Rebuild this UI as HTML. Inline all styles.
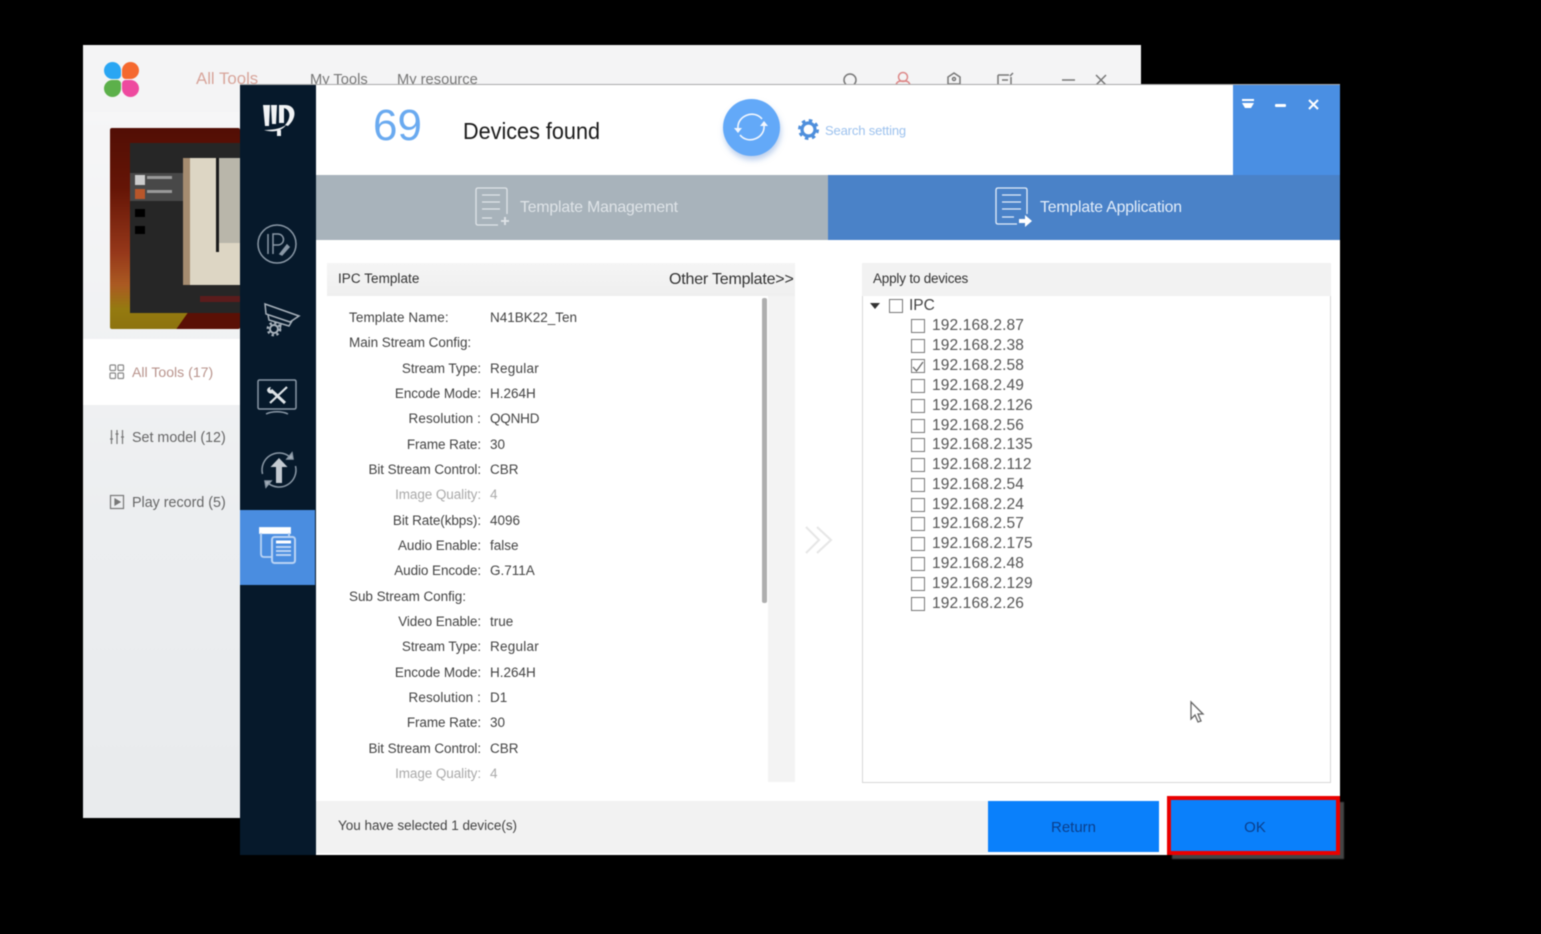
<!DOCTYPE html>
<html><head><meta charset="utf-8"><style>
html,body{margin:0;padding:0;background:#000;}
body{width:1541px;height:934px;position:relative;overflow:hidden;font-family:"Liberation Sans",sans-serif;}
div,span,svg{position:absolute;}
#w{left:0;top:0;width:1541px;height:934px;overflow:hidden;background:#000;filter:blur(.4px);}
.t{white-space:nowrap;line-height:1;}
.l{font-size:13.500px;color:#444;text-align:right;right:1060px;white-space:nowrap;line-height:14px;letter-spacing:-.08px;margin-top:1px;}
.v{font-size:13.500px;color:#444;left:490px;white-space:nowrap;line-height:14px;letter-spacing:0;margin-top:1px;}
.ip{font-size:15.500px;color:#555;left:932px;white-space:nowrap;line-height:16px;letter-spacing:.13px;}
.cb{left:910px;width:12px;height:12px;border:1px solid #777;background:#fff;box-sizing:content-box;margin:1px 0 0 1px;}
</style></head><body><div id="w">

<!-- back window -->
<div style="left:83px;top:45px;width:1058px;height:773px;background:#f4f4f5;"></div>
<div style="left:83px;top:112px;width:157px;height:706px;background:linear-gradient(#f6f6f7,#eceef0 60%,#e9ebed);"></div>
<div style="left:104px;top:62px;width:17px;height:17px;background:#2aa6f3;border-radius:50% 50% 22% 50%;"></div>
<div style="left:122px;top:62px;width:17px;height:17px;background:#f5692f;border-radius:50% 50% 50% 22%;"></div>
<div style="left:104px;top:80px;width:17px;height:17px;background:#5cb04a;border-radius:50% 22% 50% 50%;"></div>
<div style="left:122px;top:80px;width:17px;height:17px;background:#ee4a9f;border-radius:22% 50% 50% 50%;"></div>
<div class="t" style="left:196px;top:71px;font-size:16.800px;color:#d8a59b;">All Tools</div>
<div class="t" style="left:310px;top:73px;font-size:14.700px;color:#777;">My Tools</div>
<div class="t" style="left:397px;top:73px;font-size:14.700px;color:#777;">My resource</div>
<svg style="left:838px;top:68px" width="280" height="17" viewBox="0 0 280 17" fill="none" stroke="#777" stroke-width="1.500">
<circle cx="12" cy="12" r="6"/>
<circle cx="65" cy="9" r="4.500" stroke="#d88"/><path d="M58 17c1-4 4-4 7-4s6 0 7 4" stroke="#d88"/>
<path d="M110 16V9l6-4 6 4v7z"/><circle cx="116" cy="11" r="1.500"/>
<path d="M160 7h11M160 7v10M164 12h6M172 8l3-3M173 9v8"/>
<path d="M224 12h13"/><path d="M258 7l10 10M268 7l-10 10"/>
</svg>
<!-- thumbnail -->
<div style="left:110px;top:128px;width:130px;height:201px;background:linear-gradient(180deg,#520e05 0%,#651506 30%,#96381a 62%,#ab5a22 78%,#957a10 90%,#8d730e 100%);border-radius:2px;overflow:hidden;">
<div style="left:20px;top:15px;width:110px;height:170px;background:#262626;"></div>
<div style="left:20px;top:45px;width:53px;height:28px;background:#484848;"></div>
<div style="left:25px;top:47px;width:10px;height:10px;background:#ccc;"></div>
<div style="left:25px;top:61px;width:10px;height:10px;background:#b8562a;"></div>
<div style="left:25px;top:81px;width:10px;height:8px;background:#000;"></div>
<div style="left:25px;top:98px;width:10px;height:8px;background:#000;"></div>
<div style="left:37px;top:48px;width:25px;height:3px;background:#999;"></div>
<div style="left:37px;top:62px;width:25px;height:3px;background:#999;"></div>
<div style="left:73px;top:30px;width:57px;height:127px;background:#ddd6c4;"></div>
<div style="left:73px;top:30px;width:7px;height:127px;background:#a58c70;"></div>
<div style="left:106px;top:30px;width:3px;height:94px;background:#1a1a1a;"></div>
<div style="left:109px;top:30px;width:21px;height:85px;background:#b9b6aa;"></div>
<div style="left:90px;top:168px;width:40px;height:6px;background:#5a1c1c;"></div>
<div style="left:72px;top:185px;width:80px;height:16px;background:#5a1005;transform:skewX(-35deg);"></div>
</div>
<div style="left:83px;top:339px;width:157px;height:66px;background:#fff;"></div>
<svg style="left:109px;top:364px" width="16" height="16" viewBox="0 0 16 16" fill="none" stroke="#888" stroke-width="1.200"><rect x="1" y="1" width="5.500" height="5.500" rx="1"/><rect x="9" y="1" width="5.500" height="5.500" rx="1"/><rect x="1" y="9" width="5.500" height="5.500" rx="1"/><rect x="9" y="9" width="5.500" height="5.500" rx="1"/></svg>
<div class="t" style="left:132px;top:365px;font-size:14.100px;color:#b8938c;">All Tools (17)</div>
<svg style="left:109px;top:429px" width="16" height="16" viewBox="0 0 16 16" fill="none" stroke="#777" stroke-width="1.200"><path d="M2.500 1v14M8 1v14M13.500 1v14M1 10h3M6.500 5h3M12 8h3"/></svg>
<div class="t" style="left:132px;top:431px;font-size:14.300px;color:#666;">Set model (12)</div>
<svg style="left:109px;top:494px" width="16" height="16" viewBox="0 0 16 16" fill="none" stroke="#777" stroke-width="1.200"><rect x="1.500" y="1.500" width="13" height="13"/><path d="M6 5l5 3-5 3z" fill="#777"/></svg>
<div class="t" style="left:132px;top:496px;font-size:14.300px;color:#666;">Play record (5)</div>

<!-- front window -->
<div style="left:240px;top:84px;width:1100px;height:771px;background:#fff;border-top:1px solid #aaa;box-sizing:border-box;"></div>
<!-- sidebar -->
<div style="left:240px;top:85px;width:76px;height:770px;background:#06192b;"></div>
<div style="left:240px;top:510px;width:75px;height:75px;background:#4a8de0;"></div>
<svg style="left:258px;top:100px" width="42" height="38" viewBox="0 0 42 38" fill="#f0f2f4">
<path d="M5 5h7l-1 21H7zM13 5h6l-1 19h-4z"/>
<path d="M21 5h6c11 0 13 12 3 21l-3-1c6-6 6-15-1-17v15h-5z"/>
<path d="M6 30c8 0 16-1 22-5-4 6-13 8-22 5z"/><rect x="19" y="30" width="4" height="6"/>
</svg>
<svg style="left:256px;top:223px" width="42" height="42" viewBox="0 0 42 42" fill="none" stroke="#8a98a6" stroke-width="1.500">
<circle cx="21" cy="21" r="19"/><path d="M12 11v20M17 31V11h5a5.500 5.500 0 0 1 0 11h-5"/><path d="M24 31l7-9 2 2-7 8z" fill="#8a98a6"/>
</svg>
<svg style="left:259px;top:302px" width="42" height="36" viewBox="0 0 42 36" fill="none" stroke="#a7b1bb" stroke-width="1.500">
<path d="M6 2l34 12-9 6L7 12z"/><path d="M9 13l1 5 20 6 3-5M22 22l-1 6-3-1"/>
<circle cx="15" cy="27" r="4" stroke-width="2"/><circle cx="15" cy="27" r="6.200" stroke-width="2.400" stroke-dasharray="2.400 2.470"/>
</svg>
<svg style="left:256px;top:378px" width="42" height="38" viewBox="0 0 42 38" fill="none" stroke="#8a98a6" stroke-width="1.500">
<rect x="2" y="2" width="38" height="29" rx="1.500"/><path d="M10 36c6-3 16-3 22 0"/>
<path d="M15 12l14 13" stroke-width="3" stroke="#dde2e6"/><path d="M31 9L14 25" stroke-width="2.200" stroke="#dde2e6"/>
<path d="M11 12a4 4 0 0 0 6 3l-3-4 1-2a4 4 0 0 0-4 3z" fill="#dde2e6" stroke="none"/>
</svg>
<svg style="left:259px;top:450px" width="40" height="40" viewBox="0 0 40 40" fill="none" stroke="#8a98a6" stroke-width="1.500">
<path d="M3.500 24A17 17 0 0 1 31 7M36.500 16A17 17 0 0 1 9 33"/><path d="M33 3l1 6-6 0zM7 37l-1-6 6 0z" fill="#a7b1bb"/>
<path d="M20 8l8.500 9h-5.500v16h-6V17h-5.500z" fill="#c3cad1" stroke="none"/>
</svg>
<svg style="left:259px;top:527px" width="38" height="38" viewBox="0 0 38 38" fill="none" stroke="#b9d3f4" stroke-width="1.800">
<path d="M1 1h30v5H1z" fill="#fff" stroke="#fff"/><path d="M2 6v21q0 3 3 3h7"/><path d="M30 6v4"/>
<rect x="13" y="10" width="23" height="26" rx="2.500" stroke-width="2"/>
<path d="M17 15h15" stroke="#fff" stroke-width="3"/><path d="M17 20h15M17 24h15M17 28h15" stroke-width="2"/>
</svg>

<!-- header -->
<div class="t" style="left:373px;top:104px;font-size:44px;color:#6aaaf0;">69</div>
<div class="t" style="left:463px;top:120px;font-size:23px;color:#1a1a1a;transform:scaleX(.94);transform-origin:left;">Devices found</div>
<div style="left:723px;top:99px;width:57px;height:57px;border-radius:50%;background:#63a9f8;box-shadow:1px 4px 6px rgba(120,160,220,.5);"></div>
<svg style="left:730px;top:106px" width="42" height="42" viewBox="0 0 42 42" fill="none" stroke="#f2f7fe" stroke-width="1.600">
<path d="M8 22C7 10 24 3 32 13M34 20c1 12-16 19-24 9"/><path d="M4 22l4 5 4-5zM38 20l-4-5-4 5z" fill="#f2f7fe" stroke="none"/>
</svg>
<svg style="left:798px;top:119px" width="21" height="21" viewBox="0 0 21 21"><circle cx="10.500" cy="10.500" r="6.500" fill="none" stroke="#4f8fdc" stroke-width="3.200"/><circle cx="10.500" cy="10.500" r="9" fill="none" stroke="#4f8fdc" stroke-width="3" stroke-dasharray="3.500 3.570"/></svg>
<div class="t" style="left:825px;top:124px;font-size:13px;color:#9dc2ee;letter-spacing:-.15px;">Search setting</div>
<div style="left:1233px;top:85px;width:107px;height:90px;background:#4a8fe3;"></div>
<svg style="left:1240px;top:97px" width="82" height="16" viewBox="0 0 82 16" fill="#fff">
<rect x="2" y="2" width="12" height="2"/><path d="M2 6h12l-3 5H5z"/><rect x="35" y="7" width="11" height="3" rx="1"/>
<path d="M69 3l9 9M78 3l-9 9" stroke="#fff" stroke-width="2" fill="none"/>
</svg>

<!-- tabs -->
<div style="left:316px;top:175px;width:512px;height:65px;background:#a8b3bb;"></div>
<div style="left:828px;top:175px;width:512px;height:65px;background:#4a82c8;"></div>
<svg style="left:474px;top:186px" width="36" height="42" viewBox="0 0 36 42" fill="none" stroke="#dfe4e8" stroke-width="1.300">
<path d="M33 28V4q0-2-2-2H4q-2 0-2 2v33q0 2 2 2h20"/><path d="M8 9h18M8 16h18M8 23h18M8 32h10"/><path d="M31 31v8M27 35h8" stroke-width="1.800"/>
</svg>
<div class="t" style="left:520px;top:200px;font-size:15.800px;color:#dfe4e8;letter-spacing:-.15px;">Template Management</div>
<svg style="left:994px;top:186px" width="40" height="44" viewBox="0 0 40 44" fill="none" stroke="#e4eefa" stroke-width="1.300">
<path d="M33 28V4q0-2-2-2H4q-2 0-2 2v32q0 2 2 2h19"/><path d="M8 9h19M8 16h19M8 23h19M8 31h12"/><path d="M25 33h6v-4l7 6-7 6v-4h-6z" fill="#fff" stroke="none"/>
</svg>
<div class="t" style="left:1040px;top:200px;font-size:15.800px;color:#e4eefa;letter-spacing:-.15px;">Template Application</div>

<!-- left panel -->
<div style="left:327px;top:263px;width:468px;height:33px;background:linear-gradient(#f5f5f5,#efefef);"></div>
<div class="t" style="left:338px;top:272px;font-size:13.500px;color:#333;letter-spacing:.05px;">IPC Template</div>
<div class="t" style="left:669px;top:272px;font-size:16px;color:#333;letter-spacing:-.2px;">Other Template&gt;&gt;</div>
<div style="left:768px;top:296px;width:27px;height:486px;background:#f3f3f3;"></div>
<div style="left:762px;top:298px;width:5px;height:305px;background:#aeaeae;border-radius:2px;"></div>

<div class="t" style="left:349px;top:311px;font-size:13.500px;color:#444;letter-spacing:.1px;">Template Name:</div>
<div class="v" style="top:310px;width:89px;overflow:hidden;">N41BK22_Ten</div>
<div class="t" style="left:349px;top:336px;font-size:13.500px;color:#444;letter-spacing:-.05px;">Main Stream Config:</div>
<div class="l" style="top:361px;">Stream Type:</div><div class="v" style="top:361px;letter-spacing:.25px;">Regular</div>
<div class="l" style="top:386px;">Encode Mode:</div><div class="v" style="top:386px;">H.264H</div>
<div class="l" style="top:411px;letter-spacing:.1px;">Resolution :</div><div class="v" style="top:411px;letter-spacing:-.2px;">QQNHD</div>
<div class="l" style="top:437px;">Frame Rate:</div><div class="v" style="top:437px;">30</div>
<div class="l" style="top:462px;">Bit Stream Control:</div><div class="v" style="top:462px;">CBR</div>
<div class="l" style="top:487px;color:#aaa;">Image Quality:</div><div class="v" style="top:487px;color:#aaa;">4</div>
<div class="l" style="top:513px;">Bit Rate(kbps):</div><div class="v" style="top:513px;">4096</div>
<div class="l" style="top:538px;">Audio Enable:</div><div class="v" style="top:538px;">false</div>
<div class="l" style="top:563px;">Audio Encode:</div><div class="v" style="top:563px;">G.711A</div>
<div class="t" style="left:349px;top:590px;font-size:13.500px;color:#444;letter-spacing:-.05px;">Sub Stream Config:</div>
<div class="l" style="top:614px;">Video Enable:</div><div class="v" style="top:614px;">true</div>
<div class="l" style="top:639px;">Stream Type:</div><div class="v" style="top:639px;letter-spacing:.25px;">Regular</div>
<div class="l" style="top:665px;">Encode Mode:</div><div class="v" style="top:665px;">H.264H</div>
<div class="l" style="top:690px;letter-spacing:.1px;">Resolution :</div><div class="v" style="top:690px;">D1</div>
<div class="l" style="top:715px;">Frame Rate:</div><div class="v" style="top:715px;">30</div>
<div class="l" style="top:741px;">Bit Stream Control:</div><div class="v" style="top:741px;">CBR</div>
<div class="l" style="top:766px;color:#aaa;">Image Quality:</div><div class="v" style="top:766px;color:#aaa;">4</div>

<!-- arrows -->
<svg style="left:804px;top:525px" width="30" height="30" viewBox="0 0 30 30" fill="none" stroke="#e6e6e6" stroke-width="2"><path d="M2 2l13 13L2 28M13 2l14 13-14 13"/></svg>

<!-- right panel -->
<div style="left:862px;top:263px;width:469px;height:520px;border:1px solid #d8d8d8;border-top:0;box-sizing:border-box;background:#fff;"></div>
<div style="left:862px;top:263px;width:469px;height:33px;background:#f2f2f2;"></div>
<div class="t" style="left:873px;top:272px;font-size:13.500px;color:#333;letter-spacing:-.2px;">Apply to devices</div>
<svg style="left:870px;top:302px" width="10" height="8" viewBox="0 0 10 8"><path d="M0 1h10L5 7z" fill="#333"/></svg>
<div class="cb" style="left:888px;top:298px;"></div>
<div class="t" style="left:909px;top:298px;font-size:15.500px;color:#444;">IPC</div>

<div class="cb" style="top:318px;"></div><div class="ip" style="top:318px;">192.168.2.87</div>
<div class="cb" style="top:338px;"></div><div class="ip" style="top:338px;">192.168.2.38</div>
<div class="cb" style="top:358px;"></div><div class="ip" style="top:358px;">192.168.2.58</div>
<svg style="left:911px;top:360px" width="14" height="14" viewBox="0 0 14 14" fill="none" stroke="#666" stroke-width="1.300"><path d="M2 7l3.500 4L12 2"/></svg>
<div class="cb" style="top:378px;"></div><div class="ip" style="top:378px;">192.168.2.49</div>
<div class="cb" style="top:398px;"></div><div class="ip" style="top:398px;">192.168.2.126</div>
<div class="cb" style="top:418px;"></div><div class="ip" style="top:418px;">192.168.2.56</div>
<div class="cb" style="top:437px;"></div><div class="ip" style="top:437px;">192.168.2.135</div>
<div class="cb" style="top:457px;"></div><div class="ip" style="top:457px;">192.168.2.112</div>
<div class="cb" style="top:477px;"></div><div class="ip" style="top:477px;">192.168.2.54</div>
<div class="cb" style="top:497px;"></div><div class="ip" style="top:497px;">192.168.2.24</div>
<div class="cb" style="top:516px;"></div><div class="ip" style="top:516px;">192.168.2.57</div>
<div class="cb" style="top:536px;"></div><div class="ip" style="top:536px;">192.168.2.175</div>
<div class="cb" style="top:556px;"></div><div class="ip" style="top:556px;">192.168.2.48</div>
<div class="cb" style="top:576px;"></div><div class="ip" style="top:576px;">192.168.2.129</div>
<div class="cb" style="top:596px;"></div><div class="ip" style="top:596px;">192.168.2.26</div>

<svg style="left:1188px;top:700px" width="20" height="24" viewBox="0 0 20 24" fill="#fff" stroke="#666" stroke-width="1.300"><path d="M3 2v17l4-4 3 7 3-1-3-7h5z"/></svg>

<!-- footer -->
<div style="left:316px;top:801px;width:672px;height:52px;background:#f2f2f2;"></div>
<div class="t" style="left:338px;top:819px;font-size:13.500px;color:#444;letter-spacing:-.02px;">You have selected 1 device(s)</div>
<div style="left:988px;top:801px;width:171px;height:51px;background:#0a80fb;"></div>
<div class="t" style="left:988px;top:820px;width:171px;text-align:center;font-size:15px;color:#0b3f8c;">Return</div>
<div style="left:1172px;top:802px;width:172px;height:57px;background:#444;filter:blur(.5px);"></div>
<div style="left:1167px;top:796px;width:173px;height:59px;background:#0a80fb;border:4px solid #ea0000;box-sizing:border-box;"></div>
<div class="t" style="left:1167px;top:820px;width:176px;text-align:center;font-size:15px;color:#0b3f8c;">OK</div>
</div></body></html>
